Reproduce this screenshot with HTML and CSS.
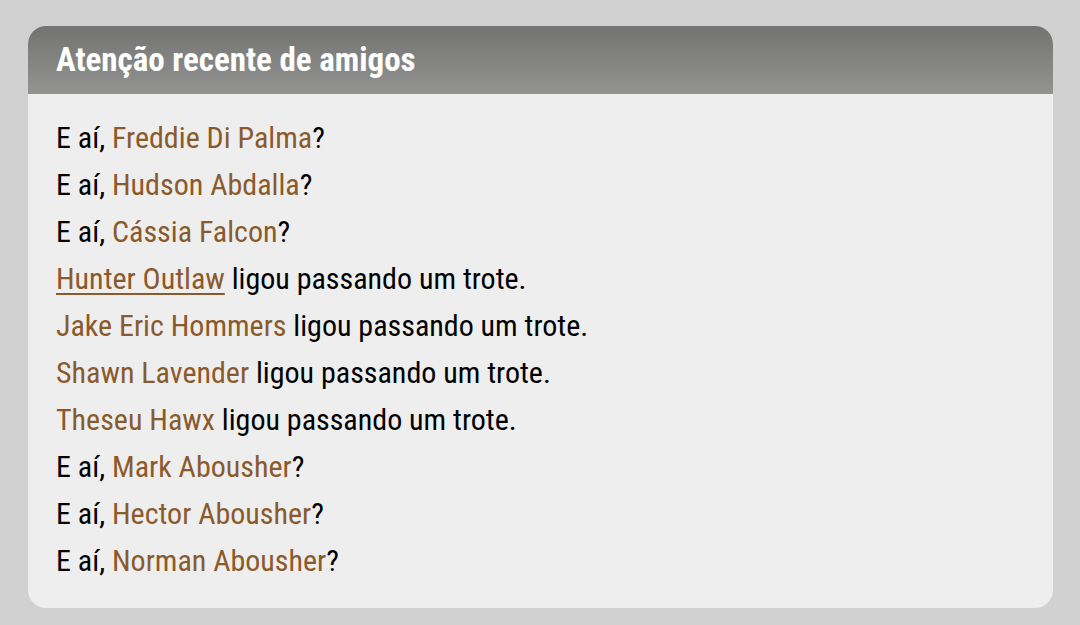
FILE: index.html
```html
<!DOCTYPE html>
<html lang="pt"><head><meta charset="utf-8"><link rel="stylesheet" href="styles.css"></head>
<body>
<div class="card">
  <div class="card-head"><h2 class="title">Atenção recente de amigos</h2></div>
  <ul class="feed">
    <li>E aí, <a class="name" href="#">Freddie Di Palma</a>?</li>
    <li>E aí, <a class="name" href="#">Hudson Abdalla</a>?</li>
    <li>E aí, <a class="name" href="#">Cássia Falcon</a>?</li>
    <li><a class="name hover" href="#">Hunter Outlaw</a> ligou passando um trote.</li>
    <li><a class="name" href="#">Jake Eric Hommers</a> ligou passando um trote.</li>
    <li><a class="name" href="#">Shawn Lavender</a> ligou passando um trote.</li>
    <li><a class="name" href="#">Theseu Hawx</a> ligou passando um trote.</li>
    <li>E aí, <a class="name" href="#">Mark Abousher</a>?</li>
    <li>E aí, <a class="name" href="#">Hector Abousher</a>?</li>
    <li>E aí, <a class="name" href="#">Norman Abousher</a>?</li>
  </ul>
</div>
</body></html>
```
FILE: styles.css
```css
html,body{margin:0;padding:0}
body{background:#d1d1d1;font-family:"Roboto Condensed",Roboto,sans-serif;padding:26px 27px 17px 28px}
.card{background:#eeeeee;border-radius:18px;overflow:hidden;height:582px;box-sizing:border-box}
.card-head{height:68px;background:linear-gradient(#737371,#939391);display:flex;align-items:center;padding:0 28px}
.title{margin:0;color:#fff;font-size:33px;font-weight:700;line-height:1;padding-bottom:2px}
.feed{list-style:none;margin:0;padding:20px 28px 0;color:#000;font-size:30px;line-height:47px}
.name{color:#8b5a2b;text-decoration:none}
.name.hover{text-decoration:underline;text-underline-offset:4px;text-decoration-thickness:2px}
```
